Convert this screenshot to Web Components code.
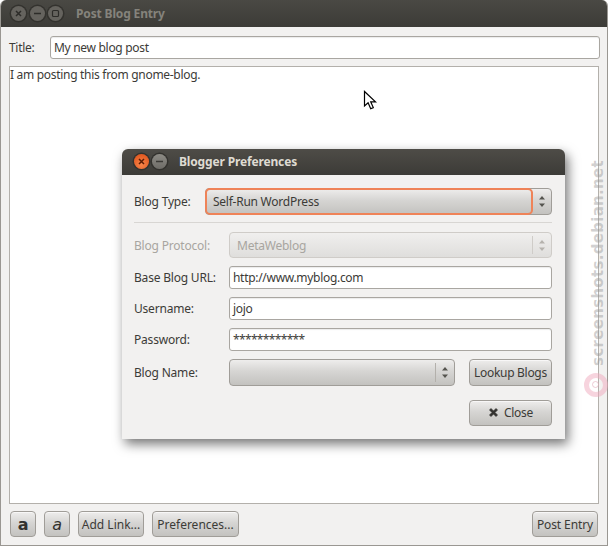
<!DOCTYPE html>
<html>
<head>
<meta charset="utf-8">
<title>Post Blog Entry</title>
<style>
  html, body { margin: 0; padding: 0; background: #fff; }
  body { width: 609px; height: 547px; overflow: hidden; position: relative; font: 12px "Noto Sans", "Open Sans", sans-serif; letter-spacing: -.3px; color: #3c3b37; }
</style>
</head>
<body>
<blog-window title-text="Post Blog Entry">
  <div style="display:flex;flex-direction:column;height:100%;box-sizing:border-box;padding:9px 8px 8px 8px;">
    <div style="display:flex;align-items:center;height:23px;">
      <span style="width:41px;box-sizing:border-box;">Title:</span>
      <gtk-entry style="flex:1;margin-right:-1px;height:23px;">My new blog post</gtk-entry>
    </div>
    <div style="flex:1;margin-top:7px;background:#fff;border:1px solid #b3b0ab;padding:0;line-height:15px;">I am posting this from gnome-blog.</div>
    <div style="display:flex;gap:8px;margin:7px 1px 0 1px;height:26px;">
      <gtk-button style="width:26px;"><b style="font:bold 16px 'DejaVu Sans';color:#33322f;">a</b></gtk-button>
      <gtk-button style="width:26px;"><i style="font:italic 16px 'DejaVu Sans';color:#33322f;">a</i></gtk-button>
      <gtk-button style="width:66px;letter-spacing:0;">Add Link...</gtk-button>
      <gtk-button style="width:87px;letter-spacing:0;">Preferences...</gtk-button>
      <gtk-button style="width:66px;margin-left:auto;letter-spacing:-.1px;">Post Entry</gtk-button>
    </div>
  </div>
</blog-window>

<svg style="position:absolute;left:363px;top:90px;" width="15" height="21" viewBox="0 0 15 21">
  <path d="M1.5 1.5V16l3.6-3.3 2.6 6 2.6-1.1-2.6-5.8h4.8z" fill="#fff" stroke="#000" stroke-width="1.2" stroke-linejoin="miter"/>
</svg>

<prefs-dialog></prefs-dialog>
<site-mark></site-mark>

<script>
const FONT = `"Noto Sans", "Open Sans", sans-serif`;

// grey gradient shared by buttons and combos
const BTN_BG = "linear-gradient(#eeedec, #d6d5d3 45%, #c3c2bf)";

class GtkEntry extends HTMLElement {
  connectedCallback() {
    this.attachShadow({ mode: "open" }).innerHTML = `
      <style>
        :host { display: flex; box-sizing: border-box; align-items: center; background: #fff; border: 1px solid #a9a6a1; border-radius: 3px; padding: 0 3px; color: #3c3b37; box-shadow: inset 0 1px 1px rgba(0,0,0,.08); font: 12px ${FONT}; letter-spacing: -.3px; white-space: nowrap; overflow: hidden; }
      </style>
      <slot></slot>`;
  }
}
customElements.define("gtk-entry", GtkEntry);

class GtkButton extends HTMLElement {
  connectedCallback() {
    this.attachShadow({ mode: "open" }).innerHTML = `
      <style>
        :host { display: flex; box-sizing: border-box; align-items: center; justify-content: center; gap: 5px; background: ${BTN_BG}; border: 1px solid #a09d98; border-radius: 4px; color: #3c3b37; font: 12px ${FONT}; letter-spacing: -.3px; white-space: nowrap; box-shadow: inset 0 1px 0 rgba(255,255,255,.6); }
      </style>
      <slot></slot>`;
  }
}
customElements.define("gtk-button", GtkButton);

class GtkCombo extends HTMLElement {
  connectedCallback() {
    const off = this.hasAttribute("disabled");
    const ink = off ? "#b5b2ad" : "#55544f";
    this.attachShadow({ mode: "open" }).innerHTML = `
      <style>
        :host { display: flex; box-sizing: border-box; align-items: stretch; border: 1px solid ${off ? "#cfccc8" : "#a09d98"}; border-radius: 4px; background: ${off ? "linear-gradient(#f0efee,#dfdedc)" : BTN_BG}; color: ${off ? "#a8a5a0" : "#3c3b37"}; font: 12px ${FONT}; letter-spacing: -.25px; white-space: nowrap; }
        .label { flex: 1; display: flex; align-items: center; padding-left: 7px; }
        .arrows { width: 18px; margin: 3px 0; border-left: 1px solid ${off ? "#cfccc8" : "#b3b0ab"}; display: flex; align-items: center; justify-content: center; }
      </style>
      <div class="label"><slot></slot></div>
      <div class="arrows">
        <svg width="6" height="11" viewBox="0 0 6 11"><path d="M3 0 6 3.500H0zM0 7.500h6L3 11z" fill="${ink}"/></svg>
      </div>`;
  }
}
customElements.define("gtk-combo", GtkCombo);

class WmButton extends HTMLElement {
  connectedCallback() {
    const kind = this.getAttribute("kind");
    const focused = this.hasAttribute("focused");
    const glyphs = {
      close: `<path d="M5 5l5 5M10 5l-5 5" stroke="${focused ? "#5a1c05" : "#2d2c29"}" stroke-width="1.5"/>`,
      min: `<path d="M4 7.5h7" stroke="${focused ? "#3a3935" : "#2d2c29"}" stroke-width="1.5"/>`,
      max: `<rect x="4.5" y="4.5" width="6" height="6" rx="1" fill="none" stroke="#2d2c29" stroke-width="1.2"/>`
    };
    const fill = focused && kind === "close"
      ? "radial-gradient(circle at 50% 70%, #f7854a, #dc4c14)"
      : focused ? "linear-gradient(#8d8b85,#6e6c67)" : "#65635e";
    this.attachShadow({ mode: "open" }).innerHTML = `
      <style>
        :host { display: block; width: 15px; height: 15px; border-radius: 50%; background: ${fill}; box-shadow: 0 0 0 1.5px #33322e; }
        svg { display: block; }
      </style>
      <svg width="15" height="15" viewBox="0 0 15 15">${glyphs[kind]}</svg>`;
  }
}
customElements.define("wm-button", WmButton);

class BlogWindow extends HTMLElement {
  connectedCallback() {
    const title = this.getAttribute("title-text");
    this.attachShadow({ mode: "open" }).innerHTML = `
      <style>
        :host { display: flex; flex-direction: column; box-sizing: border-box; width: 608px; height: 546px; border: 1px solid #9a9792; border-top: 0; background: #f2f1f0; font: 12px ${FONT}; color: #3c3b37; border-radius: 6px 6px 0 0; overflow: hidden; }
        .bar { height: 27px; flex: none; background: linear-gradient(#4a4944, #3c3b37); display: flex; align-items: center; padding-left: 11px; margin: 0 -1px; }
        .btns { display: flex; gap: 3.5px; }
        .name { margin-left: 13px; font-weight: bold; letter-spacing: -.15px; color: #85837c; }
        .body { flex: 1; min-height: 0; }
      </style>
      <div class="bar">
        <div class="btns"><wm-button kind="close"></wm-button><wm-button kind="min"></wm-button><wm-button kind="max"></wm-button></div>
        <span class="name">${title}</span>
      </div>
      <div class="body"><slot></slot></div>`;
  }
}
customElements.define("blog-window", BlogWindow);

class PrefsDialog extends HTMLElement {
  connectedCallback() {
    this.attachShadow({ mode: "open" }).innerHTML = `
      <style>
        :host { display: block; position: absolute; left: 122px; top: 149px; width: 443px; height: 290px; background: #f2f1f0; border-radius: 6px 6px 0 0; box-shadow: 3px 5px 12px rgba(0,0,0,.55); font: 12px ${FONT}; letter-spacing: -.2px; color: #3c3b37; }
        .bar { height: 26px; box-sizing: border-box; padding: 0 0 2px 12px; background: linear-gradient(#4e4c47, #3c3b37); border-radius: 6px 6px 0 0; display: flex; align-items: center; }
        .btns { display: flex; gap: 3px; }
        .name { margin-left: 12px; font-weight: bold; letter-spacing: -.15px; color: #dfdbd2; }
        .content { padding: 13px 13px 0 12px; }
        .row { display: flex; align-items: center; }
        .row label { width: 95px; flex: none; }
        .row > :last-child { flex: 1; }
        hr { border: 0; border-top: 1px solid #d8d6d3; margin: 7px 0 9px; }
        .type label { width: 71px; }
        .dim { color: #a8a5a0; }
        .ring { position: absolute; left: 83px; top: 39px; width: 328px; height: 27px; box-sizing: border-box; border: 2px solid #ef8358; border-radius: 5px; pointer-events: none; }
      </style>
      <div class="bar">
        <div class="btns"><wm-button kind="close" focused></wm-button><wm-button kind="min" focused></wm-button></div>
        <span class="name">Blogger Preferences</span>
      </div>
      <div class="content">
        <div class="row type" style="height:27px;"><label>Blog Type:</label><gtk-combo style="height:27px;">Self-Run WordPress</gtk-combo></div>
        <hr>
        <div class="row" style="height:26px;"><label class="dim">Blog Protocol:</label><gtk-combo disabled style="height:26px;">MetaWeblog</gtk-combo></div>
        <div class="row" style="height:23px;margin-top:8px;"><label>Base Blog URL:</label><gtk-entry style="height:23px;">http://www.myblog.com</gtk-entry></div>
        <div class="row" style="height:23px;margin-top:8px;"><label>Username:</label><gtk-entry style="height:23px;">jojo</gtk-entry></div>
        <div class="row" style="height:23px;margin-top:8px;"><label>Password:</label><gtk-entry style="height:23px;letter-spacing:-.65px;">************</gtk-entry></div>
        <div class="row" style="height:27px;margin-top:8px;">
          <label>Blog Name:</label>
          <div style="display:flex;gap:14px;">
            <gtk-combo style="flex:1;height:27px;"></gtk-combo>
            <gtk-button style="width:83px;height:27px;">Lookup Blogs</gtk-button>
          </div>
        </div>
        <div style="display:flex;justify-content:flex-end;margin-top:14px;">
          <gtk-button style="width:83px;height:26px;padding-bottom:1px;">
            <svg width="11" height="11" viewBox="0 0 11 11"><path d="M1.5 3 3 1.5l2.5 2.5L8 1.5 9.5 3 7 5.500 9.500 8 8 9.500 5.500 7 3 9.500 1.500 8 4 5.500z" fill="#33322f" stroke="#33322f" stroke-width=".7"/></svg>
            Close
          </gtk-button>
        </div>
      </div>
      <div class="ring"></div>`;
  }
}
customElements.define("prefs-dialog", PrefsDialog);

// the site's watermark running up the right edge
class SiteMark extends HTMLElement {
  connectedCallback() {
    this.attachShadow({ mode: "open" }).innerHTML = `
      <style>
        :host { display: block; position: absolute; left: 584px; top: 160px; width: 25px; height: 240px; pointer-events: none; }
        .text { position: absolute; left: 5px; top: 0; writing-mode: vertical-rl; transform: rotate(180deg); font: bold 15px "DejaVu Sans", sans-serif; color: rgba(150,150,150,.45); white-space: nowrap; letter-spacing: .3px; }
        .dot { position: absolute; left: 0; top: 213px; width: 14px; height: 14px; border: 5px solid rgba(240,170,190,.5); border-radius: 50%; }
        .dot::after { content: ""; position: absolute; left: 3px; top: 3px; width: 5px; height: 5px; border: 1.5px solid rgba(225,170,185,.6); border-radius: 50%; }
      </style>
      <div class="text">screenshots.debian.net</div>
      <div class="dot"></div>`;
  }
}
customElements.define("site-mark", SiteMark);
</script>
</body>
</html>
